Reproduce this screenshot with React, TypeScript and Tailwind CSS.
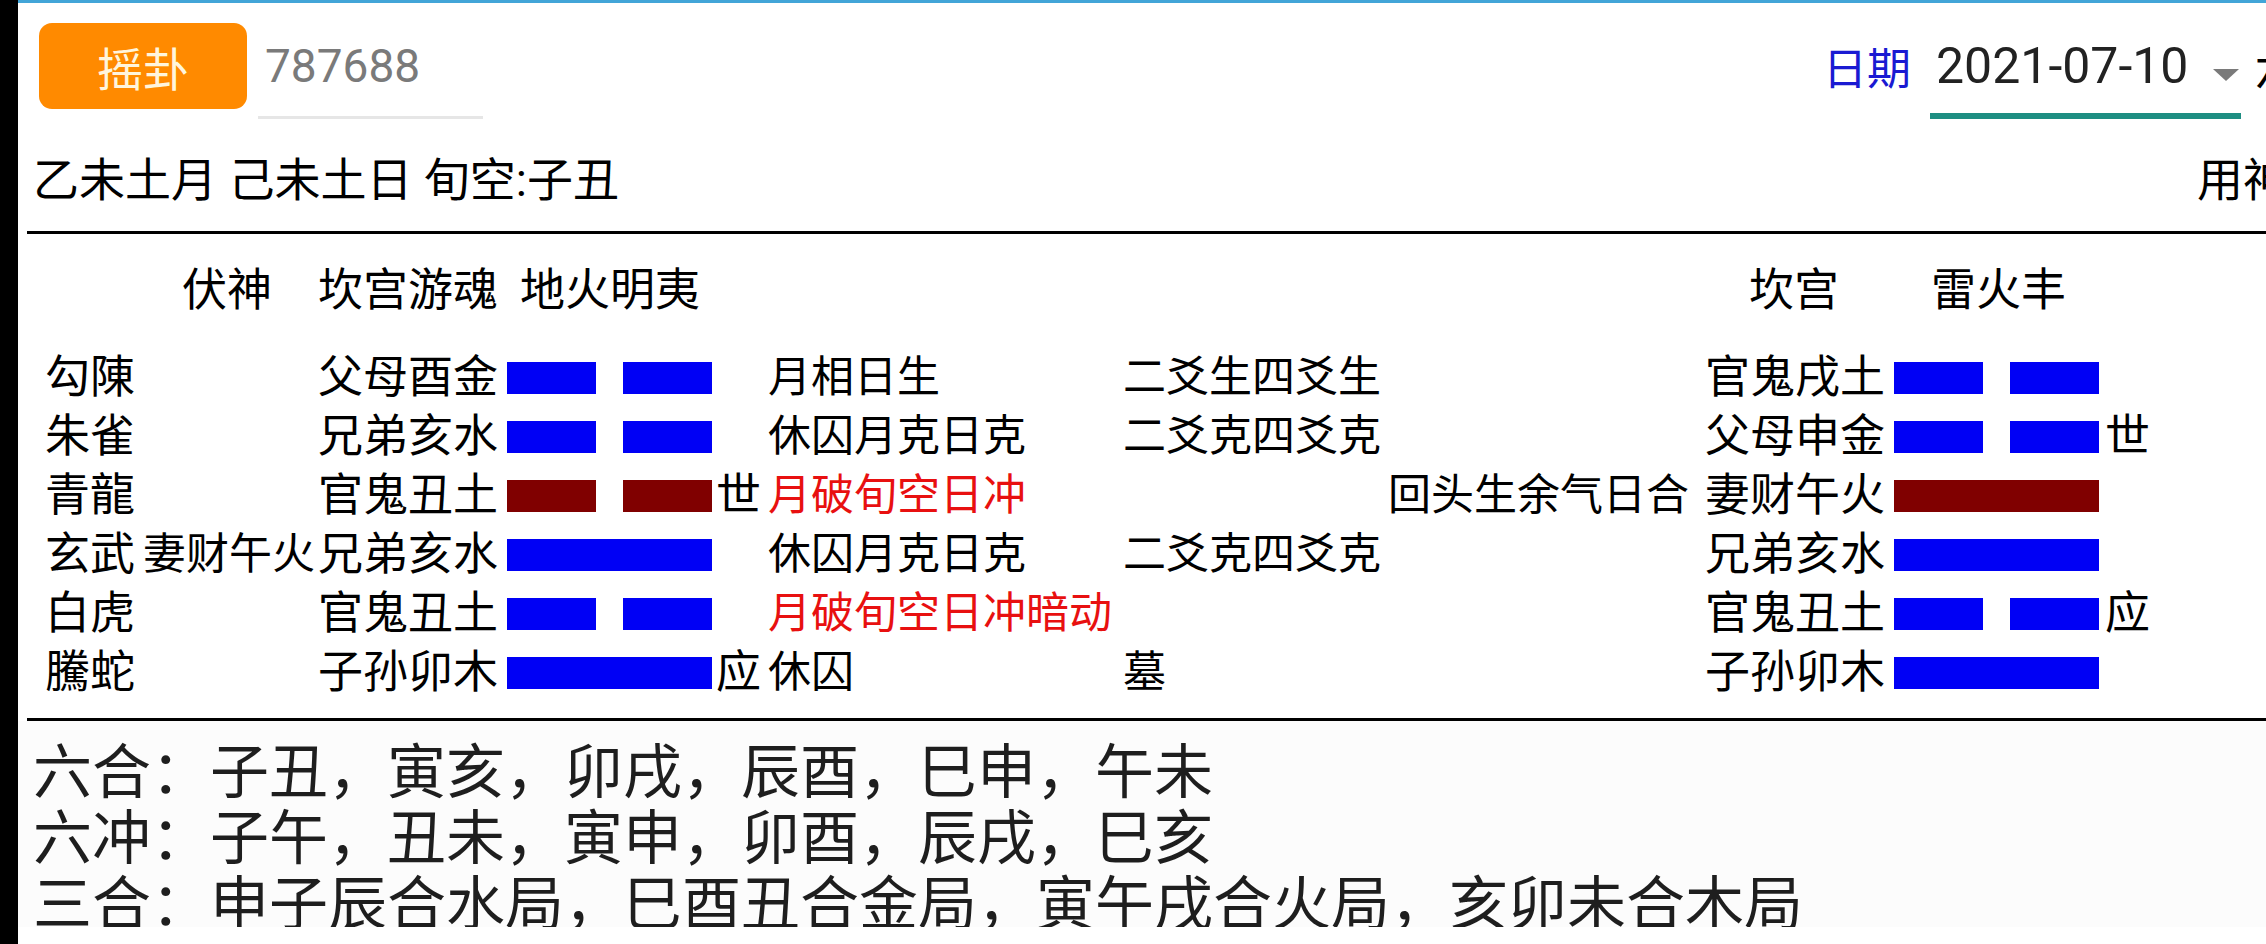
import React from "react";

type Line = {
  yin: boolean;
  moving?: boolean;
};

type Row = {
  god: string;
  fu?: string;
  name: string;
  line: Line;
  mark?: string;
  status: string;
  statusRed?: boolean;
  relation?: string;
  change?: string;
  changedName: string;
  changedLine: Line;
  changedMark?: string;
};

const rows: Row[] = [
  {
    god: "勾陳",
    name: "父母酉金",
    line: { yin: true },
    status: "月相日生",
    relation: "二爻生四爻生",
    changedName: "官鬼戌土",
    changedLine: { yin: true },
  },
  {
    god: "朱雀",
    name: "兄弟亥水",
    line: { yin: true },
    status: "休囚月克日克",
    relation: "二爻克四爻克",
    changedName: "父母申金",
    changedLine: { yin: true },
    changedMark: "世",
  },
  {
    god: "青龍",
    name: "官鬼丑土",
    line: { yin: true, moving: true },
    mark: "世",
    status: "月破旬空日冲",
    statusRed: true,
    change: "回头生余气日合",
    changedName: "妻财午火",
    changedLine: { yin: false, moving: true },
  },
  {
    god: "玄武",
    fu: "妻财午火",
    name: "兄弟亥水",
    line: { yin: false },
    status: "休囚月克日克",
    relation: "二爻克四爻克",
    changedName: "兄弟亥水",
    changedLine: { yin: false },
  },
  {
    god: "白虎",
    name: "官鬼丑土",
    line: { yin: true },
    status: "月破旬空日冲暗动",
    statusRed: true,
    changedName: "官鬼丑土",
    changedLine: { yin: true },
    changedMark: "应",
  },
  {
    god: "騰蛇",
    name: "子孙卯木",
    line: { yin: false },
    mark: "应",
    status: "休囚",
    relation: "墓",
    changedName: "子孙卯木",
    changedLine: { yin: false },
  },
];

// text cells sit a little above the bar centre, as in the app
const cell = "mb-[8px] shrink-0";

const Yao = ({ line }: { line: Line }) => {
  const color = line.moving ? "bg-[#800000]" : "bg-[#0000f5]";
  if (!line.yin) {
    return <div className={`h-[32px] w-[205px] shrink-0 ${color}`}></div>;
  }
  return (
    <div className="flex h-[32px] w-[205px] shrink-0 justify-between">
      <div className={`h-full w-[89px] ${color}`}></div>
      <div className={`h-full w-[89px] ${color}`}></div>
    </div>
  );
};

const App = () => {
  return (
    <div className="flex h-[944px] w-[2266px] overflow-hidden bg-white font-['Noto_Sans_CJK_SC',sans-serif] text-black">
      {/* left edge strip */}
      <div className="w-[18px] shrink-0 bg-black"></div>

      <div className="flex min-w-0 flex-1 flex-col overflow-hidden">
        <div className="h-[3px] shrink-0 bg-[#42a5d8]"></div>

        {/* toolbar */}
        <div className="flex shrink-0 items-start whitespace-nowrap pt-[20px]">
          <button className="ml-[21px] flex h-[86px] w-[208px] shrink-0 items-center justify-center rounded-[13px] bg-[#ff8a00] text-[46px] leading-none text-[#fff5dc]">
            摇卦
          </button>
          <div className="ml-[11px] flex h-[96px] w-[225px] shrink-0 items-center border-b-[3px] border-[#e6e6e6] pb-[6px] pl-[7px] font-['Roboto',sans-serif] text-[46px] text-[#7a7a7a]">
            787688
          </div>
          <div className="ml-[1340px] flex h-[90px] shrink-0 items-center pb-[4px] text-[44px] text-[#1a1ad2]">
            日期
          </div>
          <div className="ml-[19px] flex h-[96px] w-[311px] shrink-0 items-center border-b-[6px] border-[#1e8e82] pb-[4px] pl-[6px]">
            <span className="font-['Roboto',sans-serif] text-[50px] text-[#222]">2021-07-10</span>
            <svg className="ml-[25px] mt-[18px]" width="26" height="12" viewBox="0 0 26 12">
              <path d="M0 0H26L13 12Z" fill="#7a7a7a" />
            </svg>
          </div>
          <div className="ml-[14px] flex h-[90px] shrink-0 items-center pb-[4px] text-[44px]">六爻</div>
        </div>

        {/* date info */}
        <div className="flex h-[112px] shrink-0 items-center whitespace-nowrap pt-[10px] font-['Roboto','Noto_Sans_CJK_SC',sans-serif] text-[46px]">
          <span className="ml-[15px] w-[2164px] shrink-0">乙未土月 己未土日 旬空:子丑</span>
          <span className="shrink-0">用神</span>
        </div>

        <div className="ml-[9px] h-[3px] shrink-0 bg-black"></div>

        {/* hexagram header */}
        <div className="mt-[27px] flex h-[59px] shrink-0 items-center whitespace-nowrap pl-[27px] text-[45px] leading-[59px]">
          <div className="w-[98px] shrink-0"></div>
          <div className={`${cell} w-[175px] pl-[39px]`}>伏神</div>
          <div className={`${cell} flex w-[1387px]`}>
            <span>坎宫游魂</span>
            <span className="ml-[22px]">地火明夷</span>
          </div>
          <div className={`${cell} w-[189px] pl-[44px]`}>坎宫</div>
          <div className={`${cell} pl-[37px]`}>雷火丰</div>
        </div>

        {/* lines */}
        <div className="mt-[28px] flex shrink-0 flex-col">
          {rows.map((row, index) => (
            <div
              key={index}
              className="flex h-[59px] items-center whitespace-nowrap pl-[27px] text-[45px] leading-[59px]"
            >
              <div className={`${cell} w-[98px]`}>{row.god}</div>
              <div className={`${cell} w-[175px] text-[43px]`}>{row.fu}</div>
              <div className={`${cell} w-[189px]`}>{row.name}</div>
              <Yao line={row.line} />
              <div className={`${cell} w-[56px] pl-[4px]`}>{row.mark}</div>
              <div className={`${cell} w-[355px] text-[43px] ${row.statusRed ? "text-[#e81010]" : ""}`}>
                {row.status}
              </div>
              <div className={`${cell} w-[265px] text-[43px]`}>{row.relation}</div>
              <div className={`${cell} w-[317px] text-[43px]`}>{row.change}</div>
              <div className={`${cell} w-[189px]`}>{row.changedName}</div>
              <Yao line={row.changedLine} />
              <div className={`${cell} pl-[6px]`}>{row.changedMark}</div>
            </div>
          ))}
        </div>

        <div className="ml-[9px] mt-[16px] h-[3px] shrink-0 bg-black"></div>

        {/* combinations */}
        <div className="h-[206px] shrink-0 overflow-hidden whitespace-nowrap bg-[#fcfcfc] pl-[15px] pt-[14px] text-[59px] leading-[66px] text-[#1e1e1e]">
          <div>六合：子丑，寅亥，卯戌，辰酉，巳申，午未</div>
          <div>六冲：子午，丑未，寅申，卯酉，辰戌，巳亥</div>
          <div>三合：申子辰合水局，巳酉丑合金局，寅午戌合火局，亥卯未合木局</div>
        </div>
      </div>
    </div>
  );
};

export default App;
